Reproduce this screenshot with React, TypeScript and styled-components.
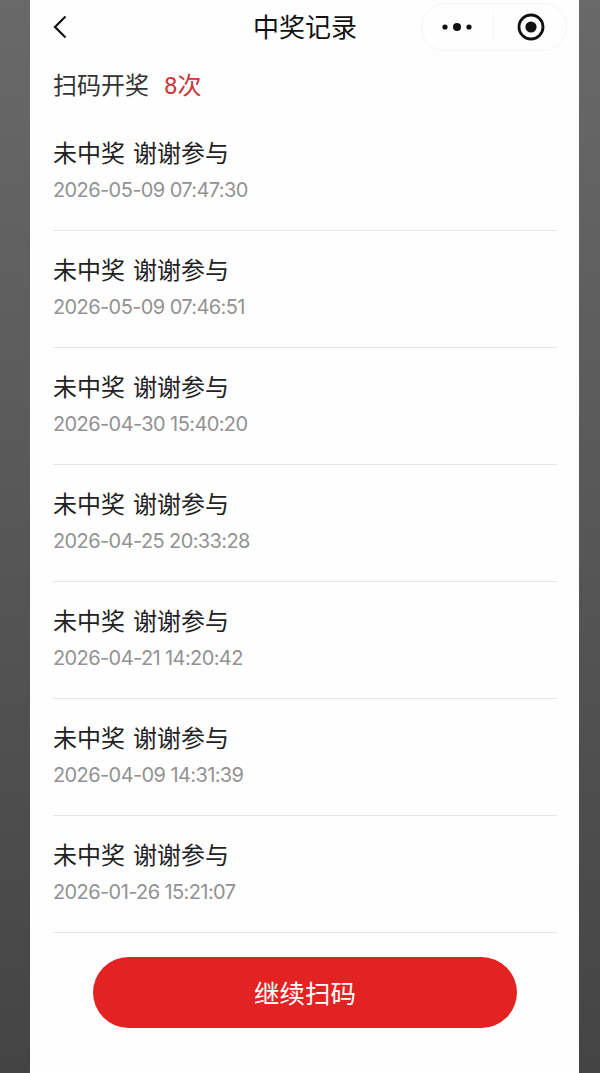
import React from 'react';
import styled, { createGlobalStyle } from 'styled-components';

const GlobalStyle = createGlobalStyle`
  html, body {
    margin: 0;
    padding: 0;
    height: 100%;
  }
  body {
    overflow: hidden;
    background: linear-gradient(180deg, #696969 0%, #444444 100%);
    font-family: Roboto, "Noto Sans CJK SC", sans-serif;
  }
`;

const Page = styled.div`
  width: 549px;
  height: 1073px;
  margin-left: 30px;
  padding: 0 22px 0 23px;
  box-sizing: border-box;
  background: #fefefe;
  display: flex;
  flex-direction: column;
`;

const NavBar = styled.header`
  position: relative;
  height: 56px;
  display: flex;
  align-items: center;
  justify-content: center;
`;

const BackButton = styled.button`
  position: absolute;
  left: 0;
  top: 15px;
  width: 14px;
  height: 24px;
  padding: 0;
  border: 0;
  background: none;
  display: block;
`;

const NavTitle = styled.h1`
  margin: 0;
  font-size: 26px;
  line-height: 56px;
  font-weight: 400;
  color: #111;
`;

const Capsule = styled.div`
  position: absolute;
  left: 368px;
  top: 3px;
  width: 146px;
  height: 48px;
  box-sizing: border-box;
  border: 1px solid #f5f5f5;
  border-radius: 24px;
  display: flex;
  align-items: center;
`;

const CapsulePart = styled.div<{ $shift?: number }>`
  flex: 1;
  height: 100%;
  padding-left: ${(props) => props.$shift ?? 0}px;
  display: flex;
  align-items: center;
  justify-content: center;
`;

const CapsuleDivider = styled.div`
  width: 1px;
  height: 32px;
  background: #f6f6f6;
`;

const Summary = styled.div`
  height: 58px;
  padding-bottom: 4px;
  box-sizing: border-box;
  display: flex;
  align-items: center;
  gap: 15px;
  font-size: 24px;
  color: #333;
`;

const Count = styled.span`
  color: #c8373a;
`;

const List = styled.ul`
  margin: 0;
  padding: 0;
  list-style: none;
`;

const Row = styled.li`
  height: 117px;
  box-sizing: border-box;
  padding-top: 22px;
  border-bottom: 1.5px solid #e6e6e6;
`;

const RowTitle = styled.div`
  height: 37px;
  font-size: 24px;
  line-height: 37px;
  word-spacing: 2px;
  color: #222;
`;

const RowDate = styled.div`
  height: 37px;
  font-family: Inter, sans-serif;
  font-size: 20px;
  letter-spacing: -0.6px;
  line-height: 35px;
  color: #929292;
`;

const ScanButton = styled.button`
  align-self: center;
  width: 424px;
  height: 71px;
  margin-top: 24px;
  padding: 0 0 3px;
  flex-shrink: 0;
  border: 0;
  border-radius: 36px;
  background: #e32322;
  color: #fff;
  font-family: inherit;
  font-size: 25.5px;
`;

const records = [
  '2026-05-09 07:47:30',
  '2026-05-09 07:46:51',
  '2026-04-30 15:40:20',
  '2026-04-25 20:33:28',
  '2026-04-21 14:20:42',
  '2026-04-09 14:31:39',
  '2026-01-26 15:21:07',
];

export default function App() {
  return (
    <>
      <GlobalStyle />
      <Page>
        <NavBar>
          <BackButton aria-label="返回">
            <svg width="14" height="24" viewBox="0 0 14 24" fill="none">
              <path d="M12.5 1.5 L2 12 L12.5 22.5" stroke="#111" strokeWidth="2.2" />
            </svg>
          </BackButton>
          <NavTitle>中奖记录</NavTitle>
          <Capsule>
            <CapsulePart>
              <svg width="30" height="10" viewBox="0 0 30 10" fill="#111">
                <circle cx="3" cy="5" r="2.6" />
                <circle cx="15" cy="5" r="4" />
                <circle cx="27" cy="5" r="2.6" />
              </svg>
            </CapsulePart>
            <CapsuleDivider />
            <CapsulePart $shift={2}>
              <svg width="28" height="28" viewBox="0 0 28 28" fill="none">
                <circle cx="14" cy="14" r="12" stroke="#111" strokeWidth="2.8" />
                <circle cx="14" cy="14" r="5.6" fill="#111" />
              </svg>
            </CapsulePart>
          </Capsule>
        </NavBar>
        <Summary>
          <span>扫码开奖</span>
          <Count>8次</Count>
        </Summary>
        <List>
          {records.map((date) => (
            <Row key={date}>
              <RowTitle>未中奖 谢谢参与</RowTitle>
              <RowDate>{date}</RowDate>
            </Row>
          ))}
        </List>
        <ScanButton>继续扫码</ScanButton>
      </Page>
    </>
  );
}
